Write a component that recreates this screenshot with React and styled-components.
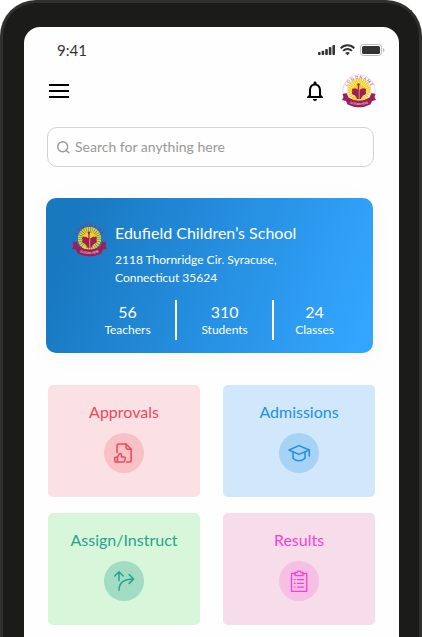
import React, { useId } from "react";
import styled, { createGlobalStyle } from "styled-components";

const GlobalStyle = createGlobalStyle`
  * { box-sizing: border-box; }
  body { margin: 0; background: #fff; font-family: Lato, sans-serif; }
  button, input { font: inherit; }
`;

const Phone = styled.div`
  min-height: 100vh;
  display: flex;
  flex-direction: column;
  padding: 24px 20px 0 21px;
  border: 3px solid #30312f;
  border-bottom: 0;
  border-radius: 36px 36px 0 0;
  background: #1b1c1a;
`;

const Screen = styled.div`
  flex: 1;
  padding-bottom: 12px;
  border-radius: 16px 16px 0 0;
  background: #fefefe;
`;

const StatusBar = styled.div`
  display: flex;
  align-items: center;
  justify-content: space-between;
  height: 44px;
  padding: 2px 14px 0 33px;
  color: #333;
  font-size: 15px;
  line-height: 20px;
`;

const StatusIcons = styled.div`
  display: flex;
  align-items: center;
  gap: 5px;
  svg { display: block; }
`;

const Header = styled.header`
  display: flex;
  align-items: center;
  justify-content: space-between;
  height: 40px;
  padding: 0 23px;
`;

const HeaderActions = styled.div`
  display: flex;
  align-items: center;
  gap: 15px;
`;

const IconButton = styled.button`
  display: block;
  padding: 0;
  border: 0;
  background: none;
  color: #000;
  cursor: pointer;
  svg { display: block; }
`;

const SearchArea = styled.form`
  padding: 16px 25px 0 23px;
`;

const SearchBox = styled.label`
  display: flex;
  align-items: center;
  gap: 4px;
  height: 40px;
  padding: 0 8px;
  border: 1px solid #d3d3d3;
  border-radius: 10px;
  color: #999;
  svg { flex: none; }
`;

const SearchInput = styled.input`
  flex: 1;
  min-width: 0;
  padding: 0;
  border: 0;
  outline: 0;
  background: none;
  color: #333;
  font-size: 14px;
  line-height: 20px;
  &::placeholder { color: #999; opacity: 1; }
`;

const SchoolArea = styled.section`
  padding: 31px 26px 0 22px;
`;

const SchoolCard = styled.div`
  padding: 24px 18px 13px 26px;
  border-radius: 10px;
  background: linear-gradient(110deg, #1878c0 8%, #33a5ff 95%);
  box-shadow: 0 4px 24px rgba(0, 0, 0, 0.03);
  color: #fff;
`;

const SchoolInfo = styled.div`
  display: flex;
  align-items: flex-start;
  gap: 8px;
`;

const SchoolName = styled.h1`
  margin: 0 0 7px;
  font-size: 16px;
  font-weight: 400;
  line-height: 22px;
`;

const Address = styled.address`
  max-width: 180px;
  font-size: 12px;
  font-style: normal;
  line-height: 18px;
`;

const Stats = styled.dl`
  display: grid;
  grid-template-columns: 6fr 6fr 5fr;
  margin: 13px 0 0 8px;
`;

const Stat = styled.div`
  display: flex;
  flex-direction: column-reverse;
  justify-content: center;
  height: 40px;
  text-align: center;
  border-right: 2px solid #fff;
  &:last-child { border-right: 0; }
`;

const StatLabel = styled.dt`
  font-size: 12px;
  line-height: 16px;
`;

const StatValue = styled.dd`
  margin: 0;
  font-size: 16px;
  line-height: 20px;
`;

const TileGrid = styled.nav`
  display: grid;
  grid-template-columns: 1fr 1fr;
  gap: 16px 23px;
  padding: 32px 24px 0;
`;

const Tile = styled.button`
  display: flex;
  flex-direction: column;
  align-items: center;
  gap: 10px;
  padding: 16px 8px 24px;
  border: 0;
  border-radius: 5px;
  background: ${(p) => p.$tone.tile};
  color: ${(p) => p.$tone.ink};
  font-size: 16px;
  line-height: 22px;
  cursor: pointer;
`;

const TileIcon = styled.span`
  width: 40px;
  height: 40px;
  border-radius: 50%;
  background: ${(p) => p.$tone.disc};
  svg { display: block; }
`;

const rays = Array.from({ length: 28 }, (_, i) => (i * 360) / 28);

function SchoolLogo({ size, halo }) {
  const id = useId();
  return (
    <svg width={size} height={size} viewBox="0 0 68 68" role="img" aria-label="School logo">
      <defs>
        <path id={`${id}t`} d="M8 35a26 26 0 0 1 52 0" />
        <path id={`${id}b`} d="M15 58q19 8 38 0" />
      </defs>
      {halo && <circle cx="34" cy="34" r="33" fill="#fff" />}
      <circle cx="34" cy="34" r="32.5" fill="none" stroke="#9b3564" strokeWidth=".8" strokeOpacity=".5" />
      <circle cx="34" cy="33" r="24" fill="none" stroke="#9b3564" strokeWidth=".8" strokeOpacity=".5" />
      <text fontFamily="Lato, sans-serif" fontSize="8" fill="#92305f" textAnchor="middle">
        <textPath href={`#${id}t`} startOffset="50%">L O G O  N A M E</textPath>
      </text>
      {rays.map((a) => (
        <path key={a} d="M34 31L32 9.5h4z" fill="#f6cf1c" transform={`rotate(${a} 34 32)`} />
      ))}
      <circle cx="34" cy="32" r="12" fill="#f6cf1c" />
      <path d="M1 40l8-2 4 9q21 13 42 0l4-9 8 2-2 6 3 6-8 2-3 7q-23 11-46 0l-3-7-8-2 3-6z" fill="#9c1f5c" />
      <path d="M32 31c-3 0-4-4-7-2-5-1-7 3-4 6-3 3 0 7 4 7 2 3 4 4 5 8h8c1-4 3-5 5-8 4 0 7-4 4-7 3-3 1-7-4-6-3-2-4 2-7 2z" fill="#9c1f5c" />
      <circle cx="33" cy="21" r="2.4" fill="#9c1f5c" />
      <path d="M33 23v10" fill="none" stroke="#9c1f5c" strokeWidth="2.6" />
      <path d="M35.5 26q-2 10-1 24" fill="none" stroke="#f4bd62" strokeWidth="1.4" />
      <path d="M22 44q5 3 7 8-6 0-9-3z" fill="#f6cf1c" />
      <text fontFamily="Lato, sans-serif" fontSize="5.5" fill="#fff" textAnchor="middle">
        <textPath href={`#${id}b`} startOffset="50%">SLOGAN HERE</textPath>
      </text>
    </svg>
  );
}

function TileDrawing({ width = 1.5, children }) {
  return (
    <svg width="40" height="40" viewBox="0 0 40 40" fill="none" stroke="currentColor" strokeWidth={width} strokeLinecap="round" strokeLinejoin="round" aria-hidden="true">
      {children}
    </svg>
  );
}

const tiles = [
  {
    label: "Approvals",
    tone: { tile: "#fbe1e4", disc: "#f7c1c7", ink: "#ee4858" },
    icon: (
      <TileDrawing>
        <path d="M13 19.5V13a2 2 0 0 1 2-2h7l5.2 5.2V27a2 2 0 0 1-2 2h-2.7" />
        <path d="M22 11v3.2a2 2 0 0 0 2 2h3.2" />
        <path d="M13.5 24.2l1.6-3.2c.3-.8 2.4-.7 2.4 1v2h2.4c1 0 1.5.8 1.3 1.7l-.6 2.2c-.2.7-.7 1.1-1.4 1.1h-5.7zM13.5 24.2h-1.8a1 1 0 0 0-1 1V28a1 1 0 0 0 1 1h1.8" />
      </TileDrawing>
    ),
  },
  {
    label: "Admissions",
    tone: { tile: "#d1e7fb", disc: "#a6d2f4", ink: "#2190e3" },
    icon: (
      <TileDrawing>
        <path d="M10 17l10-4.4L30.3 17 20 21.4z" />
        <path d="M30.3 17v6M14 19v6.2c3.2 3.3 8.8 3.3 12 0V19" />
      </TileDrawing>
    ),
  },
  {
    label: "Assign/Instruct",
    tone: { tile: "#d7f6da", disc: "#a2dcc4", ink: "#25a58c" },
    icon: (
      <TileDrawing>
        <path d="M15 19.5v-8.7M10.8 15l4.2-4.2 4.2 4.2" />
        <path d="M15 29.2c0-7 4.5-11.2 14.5-11.2M25.2 13.6l4.4 4.4-4.4 4.4" />
      </TileDrawing>
    ),
  },
  {
    label: "Results",
    tone: { tile: "#f6dde9", disc: "#f6bfe4", ink: "#fb3fd4" },
    icon: (
      <TileDrawing width={1.3}>
        <path d="M16.2 12.5h-3.7v17.8h15.2V12.5H24" />
        <path d="M16.2 14.7v-3.2h2l.7-1.3h2.4l.7 1.3h2v3.2z" />
        <path d="M15.5 18.7h.6M18.5 18.7h6M15.5 22.4h.6M18.5 22.4h6M15.5 26.1h.6M18.5 26.1h6" />
      </TileDrawing>
    ),
  },
];

const stats = [
  ["Teachers", 56],
  ["Students", 310],
  ["Classes", 24],
];

export default function App() {
  return (
    <>
      <GlobalStyle />
      <Phone>
        <Screen>
          <StatusBar>
            <time>9:41</time>
            <StatusIcons>
              <svg width="17" height="12" viewBox="0 0 17 12" fill="#333" aria-hidden="true">
                <rect x="0" y="8" width="2.6" height="3" rx=".8" />
                <rect x="3.6" y="6.8" width="2.6" height="4.2" rx=".8" />
                <rect x="7.2" y="5" width="2.6" height="6" rx=".8" />
                <rect x="10.8" y="3" width="2.6" height="8" rx=".8" />
                <rect x="14.4" y="1" width="2.6" height="10" rx=".8" />
              </svg>
              <svg width="15" height="12" viewBox="0 0 15 12" fill="none" stroke="#333" strokeWidth="1.9" aria-hidden="true">
                <path d="M.7 4.3c3.8-4 9.8-4 13.6 0M3.1 6.9c2.5-2.6 6.3-2.6 8.8 0" />
                <path d="M7.5 11.3L5.2 9c1.3-1.2 3.3-1.2 4.6 0z" fill="#333" stroke="none" />
              </svg>
              <svg width="25" height="12" viewBox="0 0 25 12" aria-hidden="true">
                <rect x=".5" y=".5" width="21" height="11" rx="3" fill="none" stroke="#bbb" />
                <rect x="2" y="2" width="18" height="8" rx="1.5" fill="#333" />
                <path d="M23 4v4q1.5-.5 1.5-2T23 4z" fill="#bbb" />
              </svg>
            </StatusIcons>
          </StatusBar>

          <Header>
            <IconButton type="button" aria-label="Menu">
              <svg width="24" height="24" viewBox="0 0 24 24" fill="currentColor">
                <path d="M2 5h20v2H2zM2 11h20v2H2zM2 17h20v2H2z" />
              </svg>
            </IconButton>
            <HeaderActions>
              <IconButton type="button" aria-label="Notifications">
                <svg width="24" height="24" viewBox="0 0 24 24" fill="currentColor">
                  <path d="M12 22c1.1 0 2-.9 2-2h-4c0 1.1.9 2 2 2zm6-6v-5c0-3.07-1.63-5.64-4.5-6.32V4c0-.83-.67-1.5-1.5-1.5s-1.5.67-1.5 1.5v.68C7.64 5.36 6 7.92 6 11v5l-2 2v1h16v-1l-2-2zm-2 1H8v-6c0-2.48 1.51-4.5 4-4.5s4 2.02 4 4.5v6z" />
                </svg>
              </IconButton>
              <IconButton type="button" aria-label="Profile">
                <SchoolLogo size={34} halo />
              </IconButton>
            </HeaderActions>
          </Header>

          <SearchArea role="search">
            <SearchBox>
              <svg width="15" height="15" viewBox="0 0 15 15" fill="none" stroke="currentColor" strokeWidth="1.4" strokeLinecap="round" aria-hidden="true">
                <circle cx="6.7" cy="6.7" r="5" />
                <path d="M10.4 10.4l2.4 2.4" />
              </svg>
              <SearchInput type="search" aria-label="Search" placeholder="Search for anything here" />
            </SearchBox>
          </SearchArea>

          <SchoolArea>
            <SchoolCard>
              <SchoolInfo>
                <SchoolLogo size={35} />
                <div>
                  <SchoolName>Edufield Children’s School</SchoolName>
                  <Address>2118 Thornridge Cir. Syracuse, Connecticut 35624</Address>
                </div>
              </SchoolInfo>
              <Stats>
                {stats.map(([label, value]) => (
                  <Stat key={label}>
                    <StatLabel>{label}</StatLabel>
                    <StatValue>{value}</StatValue>
                  </Stat>
                ))}
              </Stats>
            </SchoolCard>
          </SchoolArea>

          <TileGrid aria-label="School sections">
            {tiles.map(({ label, tone, icon }) => (
              <Tile key={label} type="button" $tone={tone}>
                {label}
                <TileIcon $tone={tone}>{icon}</TileIcon>
              </Tile>
            ))}
          </TileGrid>
        </Screen>
      </Phone>
    </>
  );
}
